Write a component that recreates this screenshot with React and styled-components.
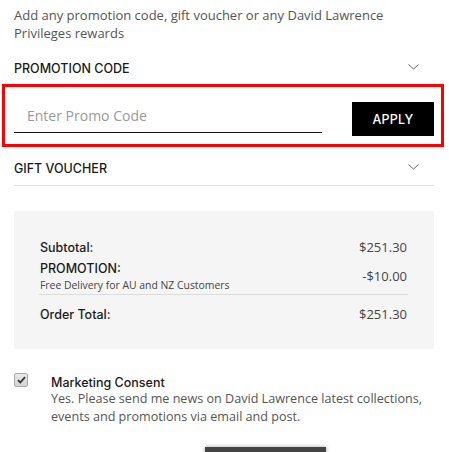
import React, { useState } from "react";
import styled, { createGlobalStyle } from "styled-components";

const GlobalStyle = createGlobalStyle`
  body {
    margin: 0;
    background: #fff;
    font-family: "Open Sans", "Liberation Sans", sans-serif;
    color: #222;
  }
`;

const Chevron = () => (
  <svg width="11" height="6" viewBox="0 0 11 6" fill="none">
    <path d="M0.5 0.5l5 4.5 5-4.5" stroke="#666" strokeWidth="1" />
  </svg>
);

const App = () => {
  const [code, setCode] = useState("");
  const [consent, setConsent] = useState(true);

  return (
    <>
      <GlobalStyle />
      <Page>
        <Intro>
          Add any promotion code, gift voucher or any David Lawrence Privileges rewards
        </Intro>

        <SectionHeader>
          <span>PROMOTION CODE</span>
          <Chevron />
        </SectionHeader>

        <PromoBox>
          <PromoInput
            placeholder="Enter Promo Code"
            value={code}
            onChange={(e) => setCode(e.target.value)}
          />
          <ApplyButton>APPLY</ApplyButton>
        </PromoBox>

        <SectionHeader $divider>
          <span>GIFT VOUCHER</span>
          <Chevron />
        </SectionHeader>

        <Summary>
          <Row>
            <Label>Subtotal:</Label>
            <Amount>$251.30</Amount>
          </Row>
          <Row $center>
            <div>
              <Label>PROMOTION:</Label>
              <Note>Free Delivery for AU and NZ Customers</Note>
            </div>
            <Amount>-$10.00</Amount>
          </Row>
          <TotalRow>
            <Label>Order Total:</Label>
            <Amount>$251.30</Amount>
          </TotalRow>
        </Summary>

        <Consent>
          <Check $checked={consent} onClick={() => setConsent(!consent)}>
            {consent && (
              <svg width="9" height="8" viewBox="0 0 9 8">
                <path d="M1 4.2l2.3 2.3L8 1.2" stroke="#333" strokeWidth="1.8" fill="none" />
              </svg>
            )}
          </Check>
          <div>
            <ConsentTitle>Marketing Consent</ConsentTitle>
            <ConsentText>
              Yes. Please send me news on David Lawrence latest collections,
              events and promotions via email and post.
            </ConsentText>
          </div>
        </Consent>

        <Footer>
          <ContinueButton />
        </Footer>
      </Page>
    </>
  );
};

export default App;

const headingFont = `"Inter", "Open Sans", sans-serif`;

const Page = styled.div`
  padding: 6px 15px 0 14px;
  height: 452px;
  box-sizing: border-box;
  overflow: hidden;
`;

const Intro = styled.p`
  margin: 0;
  font-size: 13px;
  line-height: 18px;
  color: #555;
  padding-right: 40px;
`;

const SectionHeader = styled.div`
  display: flex;
  justify-content: space-between;
  align-items: flex-start;
  height: ${(p) => (p.$divider ? "39px" : "42px")};
  padding-top: ${(p) => (p.$divider ? "14px" : "19px")};
  box-sizing: border-box;
  padding-right: 15px;
  border-bottom: ${(p) => (p.$divider ? "1px solid #e2e2e2" : "none")};
  font-family: ${headingFont};
  font-size: 12.5px;
  font-weight: 500;
  color: #1a1a1a;

  svg {
    margin-top: 3px;
  }
`;

const PromoBox = styled.div`
  display: flex;
  align-items: flex-start;
  justify-content: space-between;
  margin: 0 -10px 0 -12px;
  padding: 15px 7px 8px 9px;
  border: 3px solid #ff0000;
  height: 63px;
  box-sizing: border-box;
`;

const PromoInput = styled.input`
  width: 308px;
  height: 31px;
  box-sizing: border-box;
  border: none;
  border-bottom: 1.5px solid #111;
  padding: 0 0 3px 13px;
  font-family: inherit;
  font-size: 14px;
  color: #222;
  outline: none;
  background: transparent;

  &::placeholder {
    color: #999;
  }
`;

const ApplyButton = styled.button`
  width: 82px;
  height: 34px;
  background: #000;
  color: #fff;
  border: none;
  font-family: ${headingFont};
  font-size: 12.5px;
  font-weight: 500;
  letter-spacing: 0.2px;
  cursor: pointer;
`;

const Summary = styled.div`
  margin-top: 25px;
  background: #f5f5f5;
  padding: 26px 27px 26px 26px;
  height: 138px;
  box-sizing: border-box;
`;

const Row = styled.div`
  display: flex;
  justify-content: space-between;
  align-items: ${(p) => (p.$center ? "center" : "flex-start")};
  margin-bottom: ${(p) => (p.$center ? "0" : "2px")};
  padding-bottom: ${(p) => (p.$center ? "1px" : "0")};
`;

const Label = styled.div`
  font-family: ${headingFont};
  font-size: 12.5px;
  font-weight: 500;
  color: #1a1a1a;
  line-height: 15px;
  padding-top: 3px;
`;

const Amount = styled.div`
  font-size: 13px;
  color: #444;
  line-height: 18px;
  padding-top: 1px;
`;

const Note = styled.div`
  font-size: 10.4px;
  color: #444;
  line-height: 15px;
  margin-top: 2px;
`;

const TotalRow = styled(Row)`
  border-top: 1px solid #dcdcdc;
  margin: 0 -1px;
  padding: 9px 1px 0;
`;

const Consent = styled.div`
  display: flex;
  align-items: flex-start;
  gap: 23px;
  margin-top: 23px;
  margin-right: -12px;
`;

const Check = styled.div`
  width: 12px;
  height: 12px;
  flex-shrink: 0;
  margin-top: 1px;
  border: 1px solid #aaa;
  border-radius: 2px;
  background: linear-gradient(#e8e8e8, #d4d4d4);
  display: flex;
  align-items: center;
  justify-content: center;
  cursor: pointer;
`;

const ConsentTitle = styled.div`
  font-family: ${headingFont};
  font-size: 12.5px;
  font-weight: 500;
  color: #1a1a1a;
  line-height: 15px;
  padding-top: 3px;
`;

const ConsentText = styled.div`
  font-size: 12.6px;
  color: #555;
  line-height: 18px;
`;

const Footer = styled.div`
  display: flex;
  justify-content: center;
  margin-top: 21px;
  padding-left: 82px;
`;

const ContinueButton = styled.div`
  width: 121px;
  height: 40px;
  background: #444;
  box-shadow: 0 0 4px rgba(0, 0, 0, 0.35);
`;
